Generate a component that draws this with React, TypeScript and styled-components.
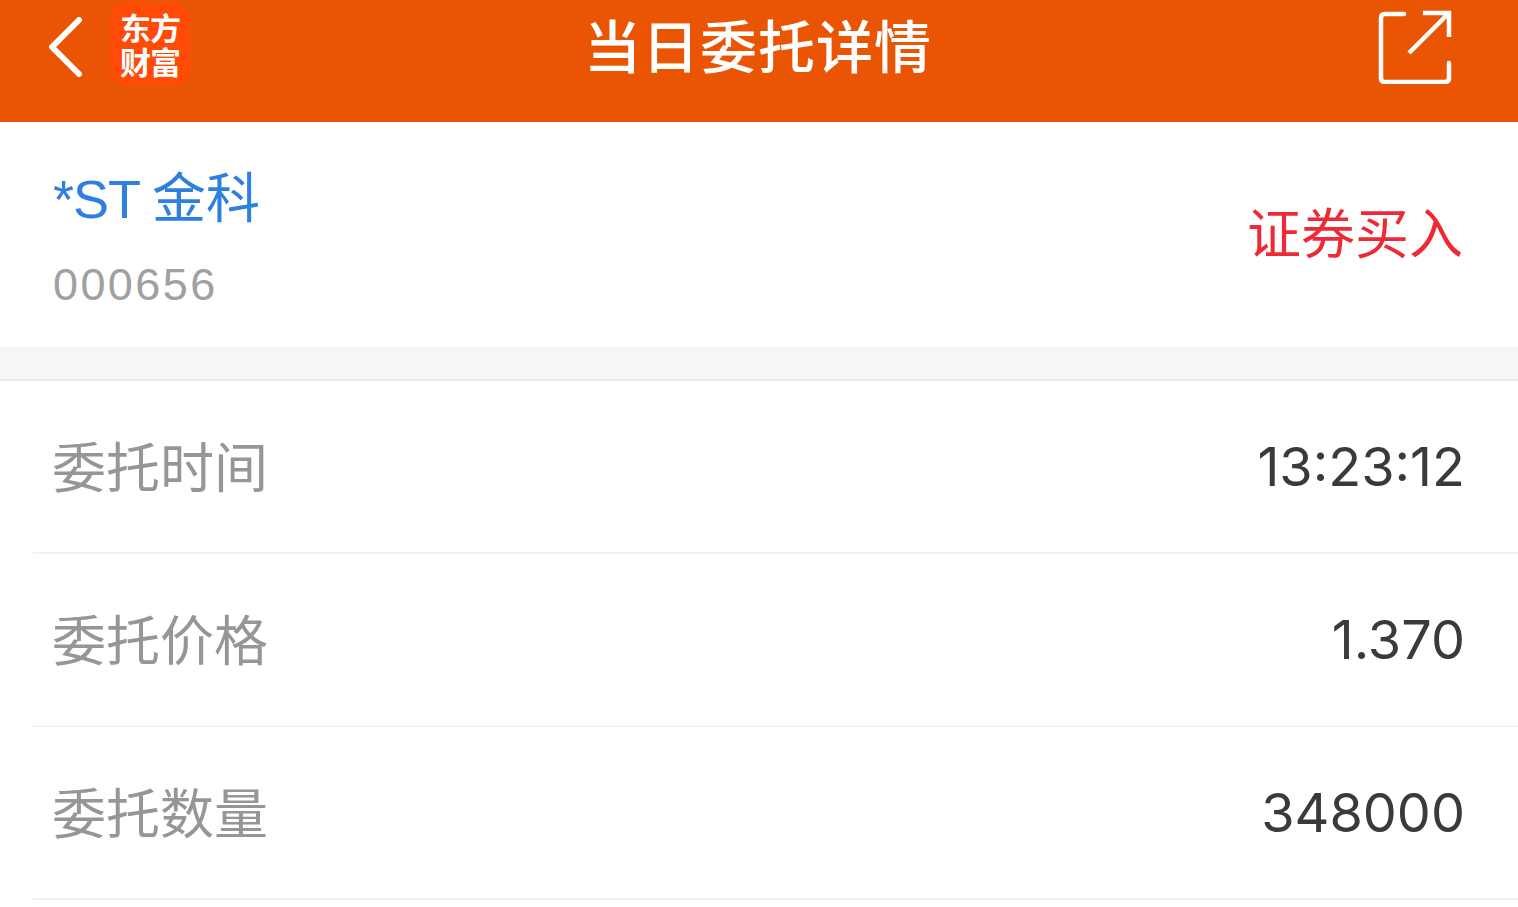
import React from 'react';
import styled, { createGlobalStyle } from 'styled-components';

const GlobalStyle = createGlobalStyle`
  html, body {
    margin: 0;
    padding: 0;
    background: #fff;
    overflow: hidden;
    font-family: 'Noto Sans', 'Noto Sans CJK SC', sans-serif;
  }
`;

const rows = [
  { label: '委托时间', value: '13:23:12' },
  { label: '委托价格', value: '1.370' },
  { label: '委托数量', value: '348000' },
];

export default function App() {
  return (
    <Page>
      <GlobalStyle />
      <Header>
        <HeaderLeft>
          <svg width="36" height="60" viewBox="0 0 36 60" fill="none">
            <path d="M32 3 L5 30 L32 57" stroke="#fff" strokeWidth="6" strokeLinecap="round" strokeLinejoin="round" />
          </svg>
          <Logo>
            <span>东方</span>
            <span>财富</span>
          </Logo>
        </HeaderLeft>
        <Title>当日委托详情</Title>
        <ShareIcon width="74" height="74" viewBox="0 0 74 74" fill="none">
          <path d="M26 4 H7 Q3 4 3 8 V68 Q3 72 7 72 H67 Q71 72 71 68 V53" stroke="#fff" strokeWidth="4.5" strokeLinecap="round" />
          <path d="M45 3 H71 V27 M70 4 L31 43" stroke="#fff" strokeWidth="4.5" />
        </ShareIcon>
      </Header>
      <StockCard>
        <div>
          <StockName>
            <Ticker>*ST</Ticker>金科
          </StockName>
          <StockCode>000656</StockCode>
        </div>
        <TradeType>证券买入</TradeType>
      </StockCard>
      <Divider />
      <List>
        {rows.map((row) => (
          <Row key={row.label}>
            <Label>{row.label}</Label>
            <Value>{row.value}</Value>
          </Row>
        ))}
      </List>
    </Page>
  );
}

const Page = styled.div`
  width: 1518px;
  height: 907px;
  overflow: hidden;
  background: #fff;
`;

const Header = styled.header`
  height: 122px;
  box-sizing: border-box;
  padding: 0 66px 28px 47px;
  background: #ea5504;
  display: grid;
  grid-template-columns: 1fr auto 1fr;
  align-items: center;
  color: #fff;
`;

const HeaderLeft = styled.div`
  display: flex;
  align-items: center;
  gap: 27px;
`;

const Logo = styled.div`
  width: 80px;
  height: 82px;
  margin-bottom: 6px;
  border-radius: 16px;
  background: #ff4a08;
  display: flex;
  flex-direction: column;
  align-items: center;
  justify-content: center;
  font-size: 31px;
  font-weight: 700;
  line-height: 34px;
  font-family: 'Noto Sans CJK SC', sans-serif;
  letter-spacing: -1px;
`;

const Title = styled.h1`
  margin: 0 0 8px 17px;
  font-size: 57px;
  line-height: 70px;
  font-weight: 500;
  letter-spacing: 1px;
  font-family: 'Noto Sans CJK SC', sans-serif;
`;

const ShareIcon = styled.svg`
  justify-self: end;
`;

const StockCard = styled.section`
  height: 225px;
  box-sizing: border-box;
  padding: 40px 55px 0 53px;
  display: flex;
  justify-content: space-between;
`;

const StockName = styled.div`
  font-size: 54px;
  line-height: 66px;
  color: #2f7fe0;
  font-family: 'Noto Sans CJK SC', sans-serif;
`;

const Ticker = styled.span`
  margin-right: 12px;
  font-family: 'Liberation Sans', sans-serif;
  letter-spacing: -1px;
`;

const StockCode = styled.div`
  margin-top: 28px;
  font-size: 45px;
  line-height: 50px;
  color: #a0a0a0;
  font-family: 'Liberation Sans', sans-serif;
  letter-spacing: 2.4px;
`;

const TradeType = styled.div`
  margin-top: 36px;
  font-size: 54px;
  line-height: 66px;
  color: #ee2a36;
  font-family: 'Noto Sans CJK SC', sans-serif;
`;

const Divider = styled.div`
  height: 32px;
  background: #f5f6f8;
  border-bottom: 2px solid #ececec;
`;

const List = styled.section`
  padding-left: 33px;
`;

const Row = styled.div`
  height: 173px;
  box-sizing: border-box;
  padding: 0 53px 0 19px;
  border-bottom: 2px solid #f2f2f2;
  display: flex;
  align-items: center;
  justify-content: space-between;
`;

const Label = styled.span`
  margin-top: -4px;
  font-size: 54px;
  color: #969696;
  font-family: 'Noto Sans CJK SC', sans-serif;
`;

const Value = styled.span`
  font-size: 54px;
  color: #3a3a3a;
  font-family: 'Inter', sans-serif;
`;
